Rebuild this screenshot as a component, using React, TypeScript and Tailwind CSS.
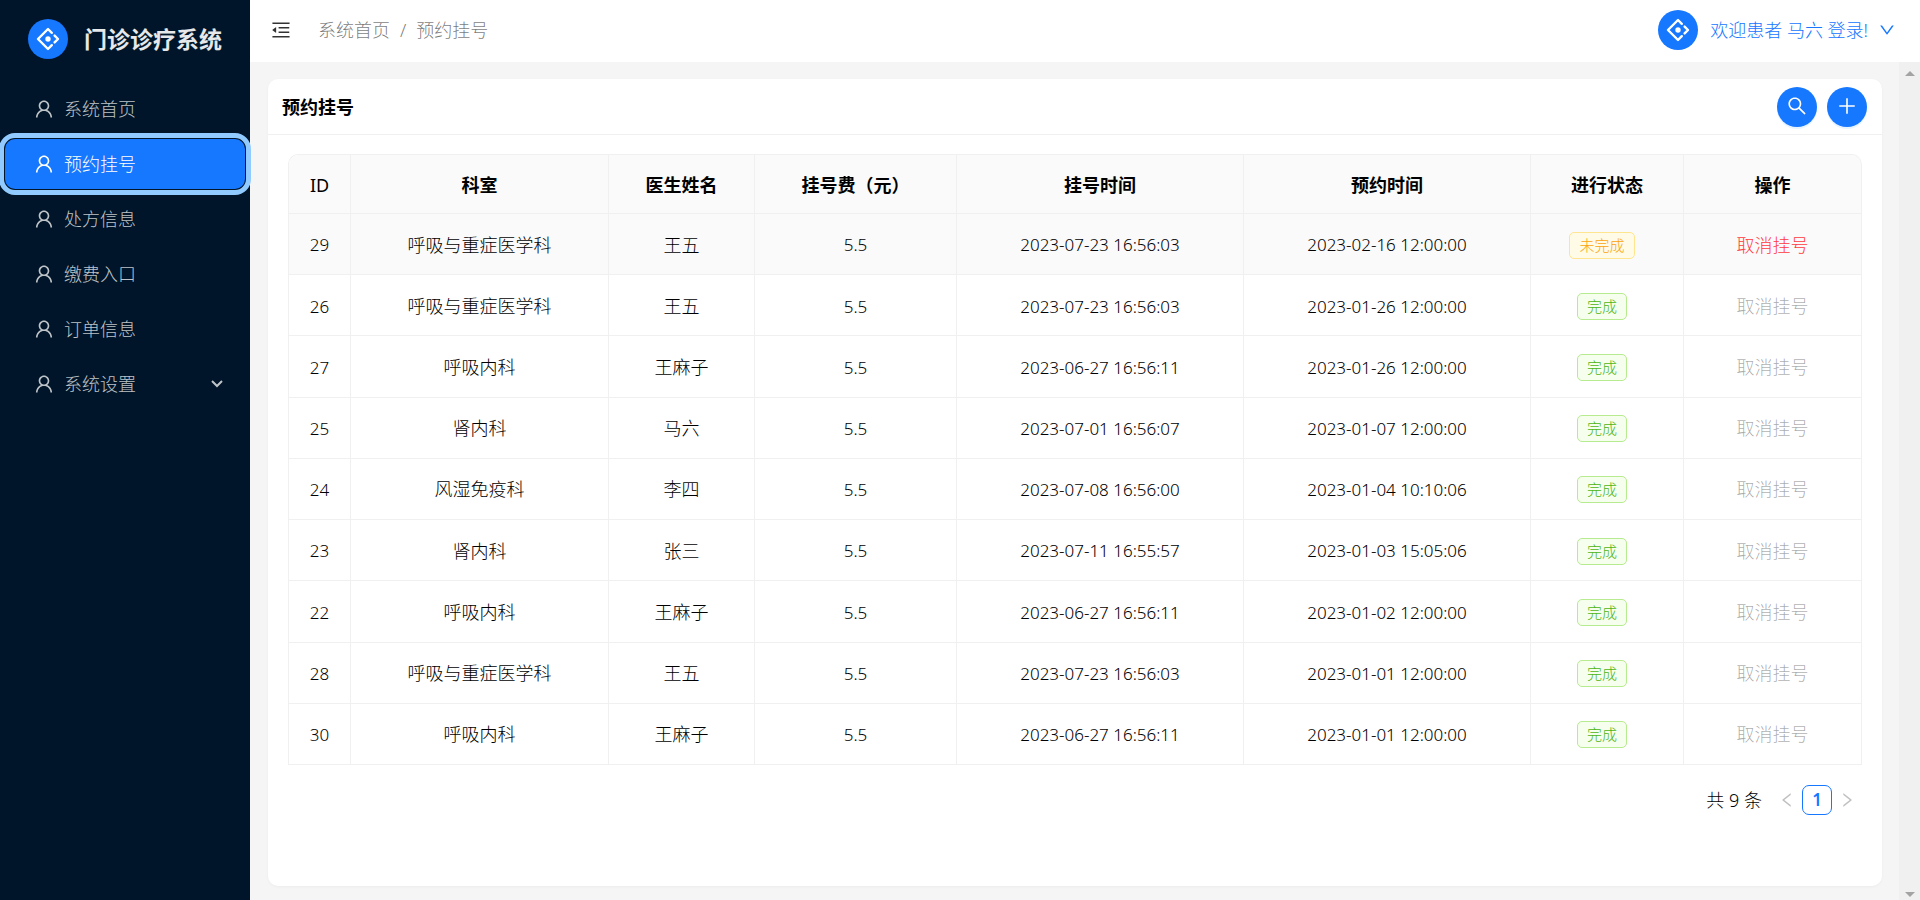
import React, { useState } from 'react';
import {
  AiOutlineDown,
  AiOutlineLeft,
  AiOutlineMenuFold,
  AiOutlinePlus,
  AiOutlineRight,
  AiOutlineSearch,
  AiOutlineUser,
} from 'react-icons/ai';

interface Registration {
  id: number;
  department: string;
  doctor: string;
  fee: string;
  createdAt: string;
  visitAt: string;
  finished: boolean;
}

const registrations: Registration[] = [
  { id: 29, department: '呼吸与重症医学科', doctor: '王五', fee: '5.5', createdAt: '2023-07-23 16:56:03', visitAt: '2023-02-16 12:00:00', finished: false },
  { id: 26, department: '呼吸与重症医学科', doctor: '王五', fee: '5.5', createdAt: '2023-07-23 16:56:03', visitAt: '2023-01-26 12:00:00', finished: true },
  { id: 27, department: '呼吸内科', doctor: '王麻子', fee: '5.5', createdAt: '2023-06-27 16:56:11', visitAt: '2023-01-26 12:00:00', finished: true },
  { id: 25, department: '肾内科', doctor: '马六', fee: '5.5', createdAt: '2023-07-01 16:56:07', visitAt: '2023-01-07 12:00:00', finished: true },
  { id: 24, department: '风湿免疫科', doctor: '李四', fee: '5.5', createdAt: '2023-07-08 16:56:00', visitAt: '2023-01-04 10:10:06', finished: true },
  { id: 23, department: '肾内科', doctor: '张三', fee: '5.5', createdAt: '2023-07-11 16:55:57', visitAt: '2023-01-03 15:05:06', finished: true },
  { id: 22, department: '呼吸内科', doctor: '王麻子', fee: '5.5', createdAt: '2023-06-27 16:56:11', visitAt: '2023-01-02 12:00:00', finished: true },
  { id: 28, department: '呼吸与重症医学科', doctor: '王五', fee: '5.5', createdAt: '2023-07-23 16:56:03', visitAt: '2023-01-01 12:00:00', finished: true },
  { id: 30, department: '呼吸内科', doctor: '王麻子', fee: '5.5', createdAt: '2023-06-27 16:56:11', visitAt: '2023-01-01 12:00:00', finished: true },
];

const menuItems = [
  { title: '系统首页' },
  { title: '预约挂号' },
  { title: '处方信息' },
  { title: '缴费入口' },
  { title: '订单信息' },
  { title: '系统设置', hasChildren: true },
];

const columns = [
  { title: 'ID', style: 'w-[62px] font-normal' },
  { title: '科室', style: 'w-[258px] font-bold' },
  { title: '医生姓名', style: 'w-[146px] font-bold' },
  { title: '挂号费（元）', style: 'w-[202px] font-bold' },
  { title: '挂号时间', style: 'w-[287px] font-bold' },
  { title: '预约时间', style: 'w-[287px] font-bold' },
  { title: '进行状态', style: 'w-[153px] font-bold' },
  { title: '操作', style: 'w-[178px] font-bold' },
];

const Logo = () => (
  <span className="flex h-10 w-10 shrink-0 items-center justify-center rounded-full bg-[#1677ff] text-white">
    <svg width="24" height="24" viewBox="0 0 24 24" fill="none" stroke="currentColor" strokeWidth="2.4" strokeLinejoin="round" strokeLinecap="round">
      <path d="M15.8 5.8 12 2 2 12l10 10 3.8-3.8" />
      <path d="M18.6 8.6 22 12l-3.4 3.4" />
      <circle cx="12" cy="12" r="2.7" fill="currentColor" stroke="none" />
    </svg>
  </span>
);

const Sidebar = () => {
  const [selected, setSelected] = useState('预约挂号');

  return (
    <aside className="relative z-10 w-[250px] shrink-0 bg-[#001529]">
      <div className="flex items-center gap-4 pt-[19px] pb-5 pl-7">
        <Logo />
        <h1 className="text-[23px] leading-10 font-bold whitespace-nowrap text-white/90">门诊诊疗系统</h1>
      </div>
      <nav className="flex flex-col gap-[5px] p-[5px]">
        {menuItems.map((item) => (
          <button
            key={item.title}
            type="button"
            onClick={() => setSelected(item.title)}
            className={`flex h-[50px] items-center rounded-[10px] pr-[22px] pl-7 text-left text-[18px] ${
              selected === item.title
                ? 'bg-[#1677ff] text-white outline-[5px] outline-offset-1 outline-[#91caff]'
                : 'text-white/75 hover:text-white'
            }`}
          >
            <AiOutlineUser size={22} />
            <span className="ml-[9px] flex-1">{item.title}</span>
            {item.hasChildren && (
              <svg width="12" height="12" viewBox="0 0 12 12" fill="none" stroke="currentColor" strokeWidth="2">
                <path d="m1 3 5 5 5-5" />
              </svg>
            )}
          </button>
        ))}
      </nav>
    </aside>
  );
};

const Header = () => (
  <header className="flex h-[62px] shrink-0 items-center bg-white pr-6 pb-[2px] pl-5">
    <button type="button" aria-label="收起菜单" className="text-black/80">
      <AiOutlineMenuFold size={22} />
    </button>
    <nav className="ml-[26px] flex gap-[10px] text-[18px] text-black/55">
      <a href="#home">系统首页</a>
      <span>/</span>
      <span>预约挂号</span>
    </nav>
    <button type="button" className="ml-auto flex items-center text-[18px] text-[#1677ff]">
      <Logo />
      <span className="ml-3">欢迎患者 马六 登录!</span>
      <AiOutlineDown size={18} className="ml-[10px]" />
    </button>
  </header>
);

const StatusTag = ({ finished }: { finished: boolean }) => (
  <span
    className={`mr-[10px] inline-block rounded-[5px] border px-[9px] text-[15px] leading-[25px] ${
      finished ? 'border-[#b7eb8f] bg-[#f6ffed] text-[#49b512]' : 'border-[#ffe58f] bg-[#fffbe6] text-[#faa30a]'
    }`}
  >
    {finished ? '完成' : '未完成'}
  </span>
);

const RegistrationTable = () => (
  <div className="overflow-hidden rounded-t-[10px] border-t border-l border-[#f0f0f0]">
    <table className="h-[610px] w-full table-fixed border-separate border-spacing-0 text-center">
      <thead>
        <tr className="h-[59px] bg-[#fafafa]">
          {columns.map((column) => (
            <th key={column.title} className={`border-r border-b border-[#f0f0f0] pt-[2px] text-[18px] last:rounded-tr-[10px] ${column.style}`}>
              {column.title}
            </th>
          ))}
        </tr>
      </thead>
      <tbody>
        {registrations.map((row) => (
          <tr key={row.id} className="first:bg-[#fafafa] hover:bg-[#fafafa] [&>td]:border-r [&>td]:border-b [&>td]:border-[#f0f0f0] [&>td]:pt-[2px]">
            <td className="text-[17px]">{row.id}</td>
            <td className="text-[18px]">{row.department}</td>
            <td className="text-[18px]">{row.doctor}</td>
            <td className="text-[17px]">{row.fee}</td>
            <td className="text-[17px]">{row.createdAt}</td>
            <td className="text-[17px]">{row.visitAt}</td>
            <td>
              <StatusTag finished={row.finished} />
            </td>
            <td className="text-[18px]">
              <button type="button" disabled={row.finished} className="text-[#ff3b3e] disabled:text-black/35">
                取消挂号
              </button>
            </td>
          </tr>
        ))}
      </tbody>
    </table>
  </div>
);

const Pagination = () => (
  <div className="mt-5 flex items-center justify-end pr-[6px] text-[18px]">
    <span>共 9 条</span>
    <button type="button" disabled aria-label="上一页" className="ml-4 text-black/25">
      <AiOutlineLeft size={18} />
    </button>
    <button type="button" className="mx-[6px] h-[30px] w-[30px] rounded-[7px] border border-[#1677ff] text-[17px] leading-7 font-semibold text-[#1677ff]">
      1
    </button>
    <button type="button" disabled aria-label="下一页" className="text-black/25">
      <AiOutlineRight size={18} />
    </button>
  </div>
);

const circleButton =
  'flex h-10 w-10 items-center justify-center rounded-full bg-[#1677ff] pb-[2px] text-white shadow-[0_2px_0_rgba(5,145,255,0.1)]';

// Always-visible gutter with the two step arrows
const ScrollGutter = () => (
  <div className="flex w-[21px] shrink-0 flex-col items-center justify-between bg-[#f0f0f0] pt-[9px] pb-[3px] text-[#a3a3a3]">
    <svg width="10" height="5" viewBox="0 0 10 5" fill="currentColor">
      <path d="M0 5 5 0l5 5z" />
    </svg>
    <svg width="10" height="5" viewBox="0 0 10 5" fill="currentColor">
      <path d="m0 0 5 5 5-5z" />
    </svg>
  </div>
);

export default function App() {
  return (
    <div className="flex min-h-screen bg-[#f5f5f5] font-['Noto_Sans','Noto_Sans_CJK_SC',sans-serif] font-light text-black">
      <Sidebar />
      <div className="flex min-w-0 flex-1 flex-col">
        <Header />
        <div className="flex flex-1">
          <main className="flex min-w-0 flex-1 flex-col pt-[17px] pr-[17px] pb-[14px] pl-[18px]">
            <section className="flex-1 rounded-[10px] bg-white shadow-[0_1px_3px_rgba(0,0,0,0.04)]">
              <div className="flex h-14 items-center border-b border-[#f0f0f0] pr-[15px] pl-[14px]">
                <h2 className="pt-[2px] text-[18px] font-bold">预约挂号</h2>
                <div className="ml-auto flex gap-[10px]">
                  <button type="button" aria-label="搜索" className={circleButton}>
                    <AiOutlineSearch size={22} />
                  </button>
                  <button type="button" aria-label="新增" className={circleButton}>
                    <AiOutlinePlus size={22} />
                  </button>
                </div>
              </div>
              <div className="px-5 pt-[19px]">
                <RegistrationTable />
                <Pagination />
              </div>
            </section>
          </main>
          <ScrollGutter />
        </div>
      </div>
    </div>
  );
}
